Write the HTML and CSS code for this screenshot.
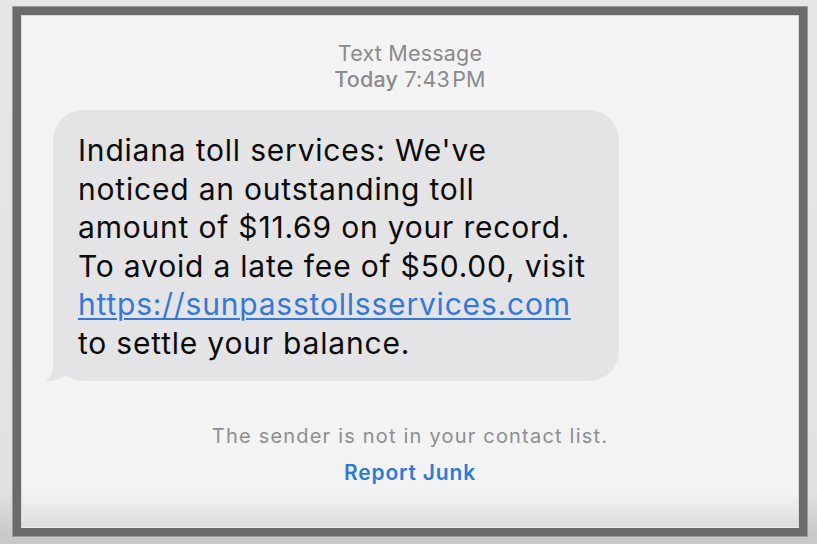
FILE: index.html
```html
<!DOCTYPE html>
<html lang="en">
<head>
  <meta charset="UTF-8" />
  <meta name="viewport" content="width=device-width, initial-scale=1.0" />
  <title>Text Message</title>
  <link rel="stylesheet" href="styles.css">
</head>
<body>
  <div class="frame">
    <div class="screen">
      <!-- HEADER -->
      <div class="meta">
        <div class="meta-title">Text Message</div>
        <div class="meta-time"><span class="day">Today</span> 7:43&#8202;PM</div>
      </div>

      <!-- MESSAGE -->
      <div class="thread">
        <div class="bubble">
          Indiana toll services: We've<br>
          noticed an outstanding toll<br>
          amount of $11.69 on your record.<br>
          To avoid a late fee of $50.00, visit<br>
          <a href="#">https://sunpasstollsservices.com</a><br>
          to settle your balance.
        </div>
      </div>

      <!-- JUNK NOTICE -->
      <div class="notice">
        <p>The sender is not in your contact list.</p>
        <a href="#" class="report">Report Junk</a>
      </div>
    </div>
  </div>
</body>
</html>
```

FILE: styles.css
```css
html, body {
  height: 100%;
}
body {
  margin: 0;
  font-family: Inter, "Noto Sans", sans-serif;
  background: linear-gradient(180deg, #e6e6e6 0%, #e2e2e2 90%, #c9c9c9 98%);
  overflow: hidden;
}
.frame {
  margin: 7px 10px 0 13px;
  height: 513px;
  border: 8px solid #6b6b6b;
  box-shadow: 0 0 0 1px #9a9a9a;
}
.screen {
  height: 100%;
  background: linear-gradient(180deg, #f3f3f3 0%, #f3f3f3 93%, #dedede 100%);
  border: 1px solid #d8d8d8;
  border-bottom-color: #ececec;
  box-sizing: border-box;
}
.meta {
  text-align: center;
  color: #8a8a8c;
  font-size: 21.5px;
  line-height: 26px;
  letter-spacing: 0.2px;
  padding-top: 24px;
}
.meta-time .day {
  font-weight: 500;
}
.thread {
  padding: 18px 0 0 31px;
}
.bubble {
  position: relative;
  width: 566px;
  box-sizing: border-box;
  padding: 21px 10px 18px 25px;
  background: #e4e4e6;
  border-radius: 30px;
  font-size: 30px;
  line-height: 38.6px;
  letter-spacing: 0.8px;
  white-space: nowrap;
  color: #0b0b0b;
}
.bubble a {
  color: #3579d8;
  text-decoration: underline;
  text-decoration-thickness: 2px;
  text-underline-offset: 3px;
}
/* tail */
.bubble::before {
  content: "";
  position: absolute;
  left: -10px;
  bottom: 0;
  width: 28px;
  height: 26px;
  background: #e4e4e6;
  border-bottom-right-radius: 22px 18px;
}
.bubble::after {
  content: "";
  position: absolute;
  left: -24px;
  bottom: -1px;
  width: 24px;
  height: 28px;
  background: #f3f3f3;
  border-bottom-right-radius: 14px 14px;
}
.notice {
  text-align: center;
  padding-top: 43px;
}
.notice p {
  margin: 0;
  font-size: 20px;
  line-height: 24px;
  color: #8e8e90;
  letter-spacing: 1.2px;
}
.report {
  display: inline-block;
  margin-top: 13px;
  font-size: 21px;
  line-height: 24px;
  font-weight: 600;
  letter-spacing: 0.8px;
  color: #2f7ad5;
  text-decoration: none;
}
```
